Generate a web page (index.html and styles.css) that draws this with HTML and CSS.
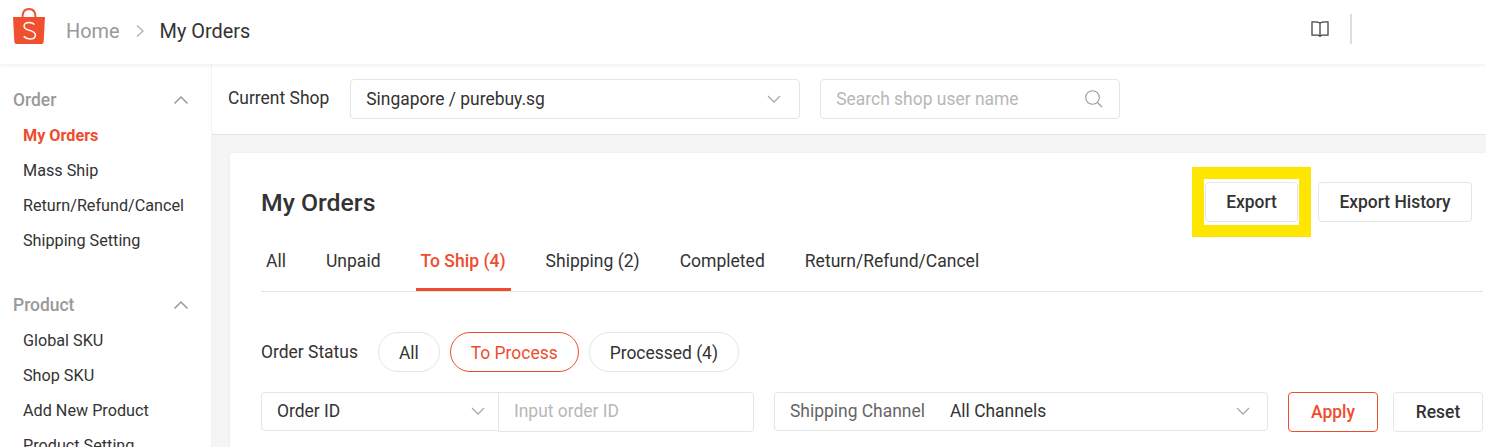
FILE: index.html
```html
<!DOCTYPE html>
<html lang="en">
<head>
    <meta charset="UTF-8">
    <title>My Orders</title>
    <link rel="stylesheet" href="styles.css">
</head>
<body>
    <header class="topbar">
        <svg class="logo" width="32" height="36" viewBox="0 0 32 36">
            <path d="M0 9h32l-1.300 24.200a2.800 2.800 0 0 1-2.800 2.800H4.100a2.800 2.800 0 0 1-2.800-2.800z" fill="#f1502f"/>
            <path d="M9.500 9C9.500 4 12 1 16 1s6.500 3 6.500 8" fill="none" stroke="#f1502f" stroke-width="2"/>
            <path d="M21.500 16.500c-1.500-1.400-3.300-2.100-5.300-2.100-3 0-5.100 1.500-5.100 3.800 0 5.300 11.300 3 11.300 8.700 0 2.500-2.300 4.100-5.500 4.100-2.400 0-4.500-.9-6.200-2.600" fill="none" stroke="#fff" stroke-width="1.500"/>
        </svg>
        <nav class="crumbs">
            <span class="crumb-home">Home</span>
            <svg width="10" height="14" viewBox="0 0 10 14"><path d="M2 1.500 8 7l-6 5.500" fill="none" stroke="#b2b2b2" stroke-width="1.300"/></svg>
            <span>My Orders</span>
        </nav>
        <div class="topbar-right">
            <svg width="18" height="18" viewBox="0 0 18 18"><path d="M9 3C7.500 2 5 1.700 1 1.900v13.300h6.300L9 16.300l1.700-1.100H17V1.900C13 1.700 10.500 2 9 3zm0 0v13" fill="none" stroke="#444" stroke-width="1.300"/></svg>
            <div class="divider"></div>
        </div>
    </header>

    <div class="layout">
        <aside class="sidebar">
            <div class="side-group">
                <div class="side-head">Order
                    <svg width="16" height="10" viewBox="0 0 16 10"><path d="M1.500 8.500 8 2l6.500 6.500" fill="none" stroke="#999" stroke-width="1.500"/></svg>
                </div>
                <a class="side-link active">My Orders</a>
                <a class="side-link">Mass Ship</a>
                <a class="side-link">Return/Refund/Cancel</a>
                <a class="side-link">Shipping Setting</a>
            </div>
            <div class="side-group">
                <div class="side-head">Product
                    <svg width="16" height="10" viewBox="0 0 16 10"><path d="M1.500 8.500 8 2l6.500 6.500" fill="none" stroke="#999" stroke-width="1.500"/></svg>
                </div>
                <a class="side-link">Global SKU</a>
                <a class="side-link">Shop SKU</a>
                <a class="side-link">Add New Product</a>
                <a class="side-link">Product Setting</a>
            </div>
        </aside>

        <main class="content">
            <div class="shopbar">
                <span class="shop-label">Current Shop</span>
                <div class="field shop-select">
                    <span>Singapore / purebuy.sg</span>
                    <svg class="chev" width="14" height="8" viewBox="0 0 14 8"><path d="M1 1l6 6 6-6" fill="none" stroke="#aaa" stroke-width="1.300"/></svg>
                </div>
                <div class="field shop-search">
                    <span class="placeholder">Search shop user name</span>
                    <svg width="19" height="19" viewBox="0 0 19 19"><circle cx="8.500" cy="8.500" r="6.800" fill="none" stroke="#999" stroke-width="1.100"/><path d="M13.500 13.500l4.500 4.500" stroke="#999" stroke-width="1.100"/></svg>
                </div>
            </div>

            <section class="card">
                <div class="card-head">
                    <h1>My Orders</h1>
                    <div class="head-actions">
                        <div class="highlight"><button class="btn btn-export">Export</button></div>
                        <button class="btn btn-history">Export History</button>
                    </div>
                </div>

                <div class="tabs">
                    <span class="tab">All</span>
                    <span class="tab">Unpaid</span>
                    <span class="tab active">To Ship (4)</span>
                    <span class="tab">Shipping (2)</span>
                    <span class="tab">Completed</span>
                    <span class="tab">Return/Refund/Cancel</span>
                </div>

                <div class="status-row">
                    <span class="status-label">Order Status</span>
                    <span class="pill">All</span>
                    <span class="pill active">To Process</span>
                    <span class="pill">Processed (4)</span>
                </div>

                <div class="filter-row">
                    <div class="field order-type">
                        <span>Order ID</span>
                        <svg width="14" height="8" viewBox="0 0 14 8"><path d="M1 1l6 6 6-6" fill="none" stroke="#aaa" stroke-width="1.300"/></svg>
                    </div>
                    <div class="field order-input"><span class="placeholder">Input order ID</span></div>
                    <div class="field channel">
                        <span class="channel-label">Shipping Channel</span>
                        <span class="channel-value">All Channels</span>
                        <svg width="14" height="8" viewBox="0 0 14 8"><path d="M1 1l6 6 6-6" fill="none" stroke="#aaa" stroke-width="1.300"/></svg>
                    </div>
                    <button class="btn btn-apply">Apply</button>
                    <button class="btn btn-reset">Reset</button>
                </div>
            </section>
        </main>
    </div>
</body>
</html>
```

FILE: styles.css
```css
html, body {
    height: 100%;
}

body {
    margin: 0;
    overflow: hidden;
    background-color: #f5f5f5;
    font-family: Roboto, Arial, sans-serif;
    font-size: 17.46px;
    color: #333;
}

.topbar {
    display: flex;
    align-items: center;
    height: 64px;
    padding: 0 134px 0 13px;
    background-color: #fff;
    box-shadow: 0 1px 4px rgba(0, 0, 0, 0.08);
    position: relative;
    z-index: 1;
}

.logo {
    margin-bottom: 12px;
    margin-right: 21px;
}

.crumbs {
    display: flex;
    align-items: center;
    gap: 15px;
    margin-bottom: 2px;
    font-size: 19.9px;
}

.crumb-home {
    color: #999;
}

.topbar-right {
    display: flex;
    align-items: center;
    gap: 21px;
    margin-left: auto;
    margin-bottom: 6px;
}

.divider {
    width: 2px;
    height: 30px;
    background-color: #ddd;
}

.layout {
    display: flex;
    height: 383px;
}

.sidebar {
    flex: none;
    width: 212px;
    padding-top: 19px;
    background-color: #fff;
    box-sizing: border-box;
    border-right: 1px solid #f2f2f2;
}

.side-group {
    margin-bottom: 30px;
}

.side-head {
    display: flex;
    align-items: center;
    justify-content: space-between;
    box-sizing: border-box;
    height: 35px;
    padding: 0 22px 1px 13px;
    color: #999;
    font-weight: 500;
}

.side-link {
    display: block;
    height: 35px;
    line-height: 35px;
    padding-left: 23px;
    font-size: 16.2px;
}

.side-link.active {
    color: #ee4d2d;
    font-weight: 700;
}

.content {
    flex: 1;
    min-width: 0;
}

.shopbar {
    display: flex;
    align-items: center;
    height: 70px;
    padding-left: 16px;
    background-color: #fff;
    border-bottom: 1px solid #e5e5e5;
}

.shop-label {
    margin-right: 21px;
    margin-bottom: 2px;
}

.field {
    display: flex;
    align-items: center;
    justify-content: space-between;
    box-sizing: border-box;
    height: 40px;
    padding: 0 15px 2px;
    background-color: #fff;
    border: 1px solid #e5e5e5;
    border-radius: 4px;
}

.shop-select {
    width: 450px;
    margin-right: 20px;
    padding-right: 18px;
    padding-bottom: 1px;
}

.shop-search {
    width: 300px;
    padding-right: 16px;
    padding-bottom: 1px;
}

.placeholder {
    color: #b7b7b7;
}

.card {
    margin: 18px 0 0 18px;
    padding: 0 0 0 31px;
    background-color: #fff;
    border-radius: 4px 0 0 0;
    height: 300px;
    box-shadow: 0 1px 4px rgba(0, 0, 0, 0.06);
}

.card-head {
    display: flex;
    align-items: center;
    justify-content: space-between;
    height: 98px;
    padding-right: 14px;
}

h1 {
    margin: 0;
    font-size: 24.8px;
    font-weight: 500;
}

.head-actions {
    display: flex;
    align-items: center;
    gap: 7px;
}

.highlight {
    display: flex;
    padding: 3px 1px;
    background-color: #fff;
    border: 12px solid #ffe600;
}

.btn {
    height: 40px;
    padding: 0 20px;
    background-color: #fff;
    border: 1px solid #e5e5e5;
    border-radius: 4px;
    font-family: inherit;
    font-size: 17.46px;
    font-weight: 500;
    color: #333;
}

.btn-export {
    width: 93px;
    padding: 0;
}

.btn-history {
    width: 154px;
    padding: 0;
}

.tabs {
    display: flex;
    gap: 30px;
    height: 62px;
    margin-right: 3px;
    margin-top: -21px;
    box-sizing: border-box;
    border-bottom: 1px solid #e5e5e5;
}

.tab {
    height: 61px;
    box-sizing: border-box;
    line-height: 63px;
    padding: 0 5px;
    font-size: 17.55px;
}

.tab.active {
    color: #ee4d2d;
    font-weight: 500;
    border-bottom: 3px solid #ee4d2d;
}

.status-row {
    display: flex;
    align-items: center;
    gap: 10px;
    margin-top: 40px;
}

.status-label {
    margin-right: 10px;
}

.pill {
    display: flex;
    align-items: center;
    box-sizing: border-box;
    height: 40px;
    padding: 2px 20px 0;
    border: 1px solid #e5e5e5;
    border-radius: 20px;
}

.pill.active {
    color: #ee4d2d;
    border-color: #ee4d2d;
}

.filter-row {
    display: flex;
    align-items: flex-start;
    margin-top: 20px;
}

.order-type {
    width: 238px;
    height: 39px;
    padding-right: 13px;
    border-radius: 4px 0 0 4px;
}

.order-input {
    width: 256px;
    margin-left: -1px;
    border-radius: 0 4px 4px 0;
}

.channel {
    width: 494px;
    height: 39px;
    margin-left: 20px;
    padding-right: 17px;
    justify-content: flex-start;
}

.channel-label {
    color: #666;
    margin-right: 25px;
}

.channel svg {
    margin-left: auto;
}

.btn-apply {
    width: 90px;
    margin-left: 20px;
    color: #ee4d2d;
    border-color: #ee4d2d;
    padding: 0;
}

.btn-reset {
    width: 90px;
    margin-left: 15px;
    padding: 0;
}
```
